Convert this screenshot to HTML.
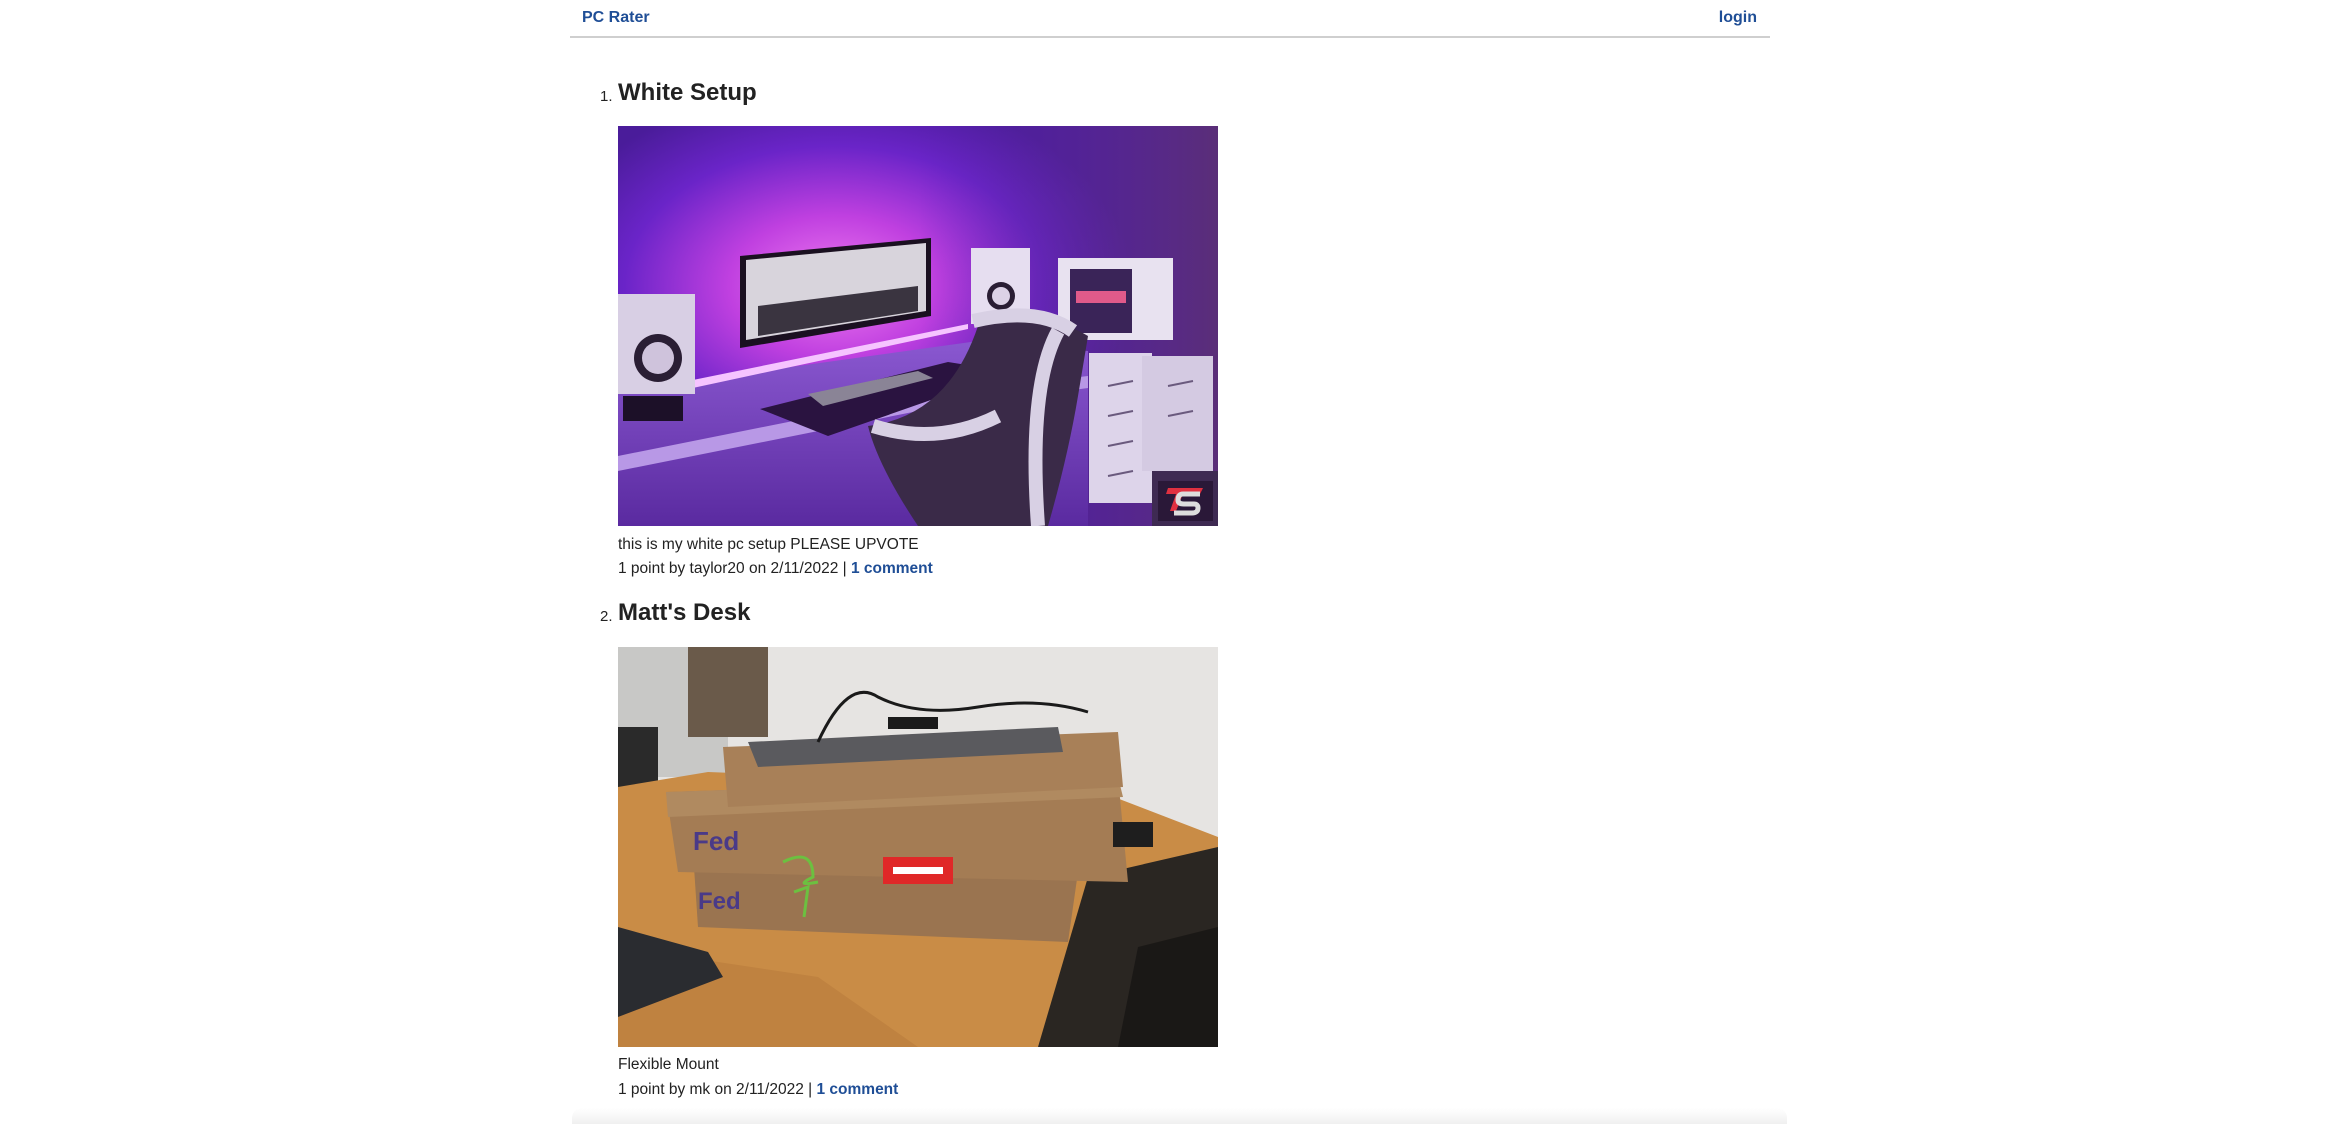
<!DOCTYPE html>
<html><head><meta charset="utf-8"><style>
*{margin:0;padding:0;box-sizing:border-box}
html,body{width:2338px;height:1124px;overflow:hidden;background:#fff;font-family:"Liberation Sans",Arial,sans-serif;color:#222}
a{color:#1f4e96;text-decoration:none;font-weight:bold}
.hdr{position:absolute;left:570px;top:0;width:1200px;height:38px;border-bottom:2px solid #cfcfcf}
.hdr .l{position:absolute;left:12px;top:9px;font-size:16px}
.hdr .r{position:absolute;right:13px;top:9px;font-size:16px}
.num{position:absolute;font-size:15px;color:#222}
.ttl{position:absolute;font-size:24px;font-weight:bold;color:#222}
.txt{position:absolute;left:618px;font-size:15.5px;color:#222;white-space:nowrap}
.img{position:absolute;left:618px;width:600px;overflow:hidden}
.shadow{position:absolute;left:572px;top:1108px;width:1215px;height:16px;background:linear-gradient(#fff,#f0f0f0);border-radius:10px 10px 0 0}
</style></head><body>
<div class="hdr"><a class="l">PC Rater</a><a class="r">login</a></div>

<div class="num" style="left:600px;top:88px">1.</div>
<div class="ttl" style="left:618px;top:79px">White Setup</div>
<div class="img" style="top:126px;height:400px">
<svg width="600" height="400" viewBox="0 0 600 400">
<defs>
<radialGradient id="g1" cx="0.36" cy="0.4" r="0.5"><stop offset="0" stop-color="#f07cf0"/><stop offset="0.35" stop-color="#c040e0"/><stop offset="0.7" stop-color="#6a24c8"/><stop offset="1" stop-color="#4a1c9a"/></radialGradient>
<linearGradient id="wr" x1="0" x2="1"><stop offset="0" stop-color="#5a22b0" stop-opacity="0"/><stop offset="1" stop-color="#5a2e78"/></linearGradient>
<linearGradient id="dk" x1="0" y1="0" x2="0" y2="1"><stop offset="0" stop-color="#8a58d0"/><stop offset="1" stop-color="#5a2aa0"/></linearGradient>
</defs>
<rect width="600" height="400" fill="url(#g1)"/>
<rect x="300" width="300" height="400" fill="url(#wr)"/>
<!-- desk -->
<polygon points="0,265 360,215 470,225 470,400 0,400" fill="url(#dk)"/>
<polygon points="0,330 300,270 470,250 470,262 300,285 0,345" fill="#b898e6"/>
<!-- led strip -->
<polygon points="70,255 350,198 350,203 70,263" fill="#f6c4ff"/>
<!-- mat -->
<polygon points="142,283 330,236 393,246 210,310" fill="#2a1340"/>
<polygon points="190,268 300,245 315,252 205,280" fill="#8a8496"/>
<!-- monitor -->
<polygon points="122,130 313,112 313,190 122,222" fill="#1a1020"/>
<polygon points="128,134 308,117 308,185 128,214" fill="#d8d4dc"/>
<polygon points="140,180 300,160 300,185 140,210" fill="#3a3440"/>
<!-- speakers -->
<rect x="0" y="168" width="77" height="100" fill="#d8cfe4"/>
<circle cx="40" cy="232" r="24" fill="#2a1e34"/><circle cx="40" cy="232" r="16" fill="#cfc3dc"/>
<rect x="5" y="270" width="60" height="25" fill="#1c1028"/>
<rect x="353" y="122" width="59" height="76" fill="#e6def0"/>
<circle cx="383" cy="170" r="14" fill="#2a1e34"/><circle cx="383" cy="170" r="9" fill="#dcd2e6"/>
<!-- pc -->
<rect x="440" y="132" width="115" height="82" fill="#e8e2f0"/>
<rect x="452" y="143" width="62" height="64" fill="#3a2458"/>
<rect x="458" y="165" width="50" height="12" fill="#e05a8a"/>
<!-- drawers -->
<rect x="471" y="227" width="63" height="150" fill="#ddd4ea"/>
<rect x="524" y="230" width="71" height="115" fill="#d4cae2"/>
<g stroke="#6a5a7e" stroke-width="2"><line x1="490" y1="260" x2="515" y2="255"/><line x1="490" y1="290" x2="515" y2="285"/><line x1="490" y1="320" x2="515" y2="315"/><line x1="490" y1="350" x2="515" y2="345"/><line x1="550" y1="260" x2="575" y2="255"/><line x1="550" y1="290" x2="575" y2="285"/></g>
<!-- chair -->
<path d="M360,200 Q430,185 470,210 L460,270 Q450,330 430,400 L300,400 Q260,340 250,300 Q330,290 360,200Z" fill="#3a2a48"/>
<path d="M355,195 Q420,180 455,205 M440,205 Q410,260 420,400 M255,300 Q320,320 380,290" stroke="#d8d0e4" stroke-width="14" fill="none"/>
<!-- floor -->
<rect x="534" y="345" width="66" height="55" fill="#3e2a52"/>
<!-- logo -->
<rect x="540" y="355" width="55" height="40" fill="#2a1838"/>
<polygon points="550,362 585,362 582,368 565,368 558,385 552,385 558,368 548,368" fill="#e03040"/>
<path d="M582,368 H565 Q560,368 560,374 Q560,378 566,378 H576 Q580,378 580,382 Q580,387 574,387 H556" stroke="#ddd" stroke-width="5" fill="none"/>
</svg></div>
<div class="txt" style="top:536px">this is my white pc setup PLEASE UPVOTE</div>
<div class="txt" style="top:560px">1 point by taylor20 on 2/11/2022 | <a>1 comment</a></div>

<div class="num" style="left:600px;top:608px">2.</div>
<div class="ttl" style="left:618px;top:599px">Matt's Desk</div>
<div class="img" style="top:647px;height:400px">
<svg width="600" height="400" viewBox="0 0 600 400">
<rect width="600" height="400" fill="#e6e4e2"/>
<rect x="0" y="0" width="110" height="130" fill="#c8c8c6"/>
<rect x="70" y="0" width="80" height="90" fill="#6a5a4a"/>
<rect x="0" y="80" width="40" height="60" fill="#2a2a2a"/>
<polygon points="0,140 90,125 470,140 600,190 600,400 0,400" fill="#c98c46"/>
<polygon points="0,300 200,330 300,400 0,400" fill="#bf8240"/>
<polygon points="470,230 600,200 600,400 420,400" fill="#2a2622"/>
<polygon points="520,300 600,280 600,400 500,400" fill="#1a1816"/>
<!-- laptop bottom-left -->
<polygon points="0,280 90,305 105,330 0,370" fill="#2a2c30"/>
<!-- boxes -->
<polygon points="75,205 460,225 450,295 80,280" fill="#9a7450"/>
<polygon points="48,145 500,130 510,235 60,225" fill="#a47c54"/>
<polygon points="48,145 500,130 505,150 50,170" fill="#b08a60"/>
<polygon points="105,100 500,85 505,140 110,160" fill="#a88058"/>
<polygon points="130,95 440,80 445,105 140,120" fill="#5a5a5e"/>
<path d="M200,95 Q230,30 260,50 Q300,70 360,60 Q420,50 470,65" stroke="#1a1a1a" stroke-width="3" fill="none"/>
<rect x="270" y="70" width="50" height="12" fill="#1a1a1a"/>
<text x="75" y="203" font-family="Liberation Sans" font-weight="bold" font-size="26" fill="#4a3a88">Fed</text>
<text x="80" y="262" font-family="Liberation Sans" font-weight="bold" font-size="24" fill="#4a3a88">Fed</text>
<rect x="265" y="210" width="70" height="27" fill="#e02828"/>
<rect x="275" y="220" width="50" height="7" fill="#fff"/>
<path d="M165,215 Q195,200 195,230 Q175,240 200,235" stroke="#6cc040" stroke-width="3" fill="none"/>
<path d="M176,245 L190,240 L186,270" stroke="#6cc040" stroke-width="3" fill="none"/>
<rect x="495" y="175" width="40" height="25" fill="#1e1e1e"/>
</svg></div>
<div class="txt" style="top:1056px">Flexible Mount</div>
<div class="txt" style="top:1081px">1 point by mk on 2/11/2022 | <a>1 comment</a></div>
<div class="shadow"></div>
</body></html>
